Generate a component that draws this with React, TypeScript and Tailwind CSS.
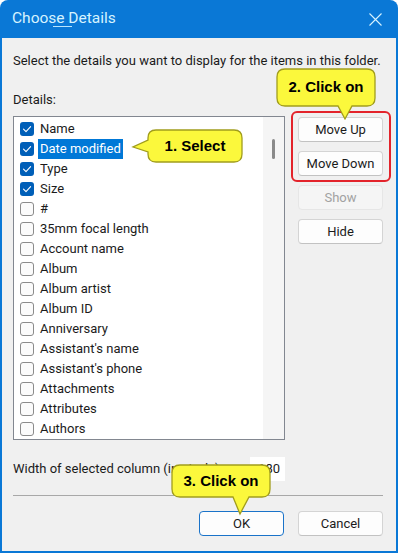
import React from "react";

const items: { label: string; checked: boolean; selected?: boolean }[] = [
  { label: "Name", checked: true },
  { label: "Date modified", checked: true, selected: true },
  { label: "Type", checked: true },
  { label: "Size", checked: true },
  { label: "#", checked: false },
  { label: "35mm focal length", checked: false },
  { label: "Account name", checked: false },
  { label: "Album", checked: false },
  { label: "Album artist", checked: false },
  { label: "Album ID", checked: false },
  { label: "Anniversary", checked: false },
  { label: "Assistant's name", checked: false },
  { label: "Assistant's phone", checked: false },
  { label: "Attachments", checked: false },
  { label: "Attributes", checked: false },
  { label: "Authors", checked: false },
];

function CheckBox({ checked }: { checked: boolean }) {
  if (checked) {
    return (
      <div className="flex h-[14px] w-[14px] shrink-0 items-center justify-center rounded-[3px] bg-[#005fb8]">
        <svg width="14" height="14" viewBox="0 0 14 14">
          <path d="M3.5 7.2 L6 9.6 L10.6 4.6" fill="none" stroke="#ffffff" strokeWidth="1.1" strokeLinecap="round" strokeLinejoin="round" />
        </svg>
      </div>
    );
  }
  return <div className="h-[14px] w-[14px] shrink-0 rounded-[3px] border border-[#8b8b8b] bg-[#fbfbfb]" />;
}

function Btn({ children, disabled, primary, className = "" }: { children: React.ReactNode; disabled?: boolean; primary?: boolean; className?: string }) {
  const base = "flex h-[25px] w-[85px] items-center justify-center rounded-[4px] text-[13px]";
  if (disabled) return <div className={`${base} border border-[#e6e6e6] bg-[#f5f5f5] text-[#a2a2a2] ${className}`}>{children}</div>;
  if (primary) return <div className={`${base} border border-[#1a73c9] bg-[#fdfdfd] text-[#1b1b1b] ${className}`}>{children}</div>;
  return <div className={`${base} border border-[#d4d4d4] border-b-[#c2c2c2] bg-[#fdfdfd] text-[#1b1b1b] ${className}`}>{children}</div>;
}

export default function App() {
  return (
    <div className="relative h-[553px] w-[398px] overflow-hidden bg-white" style={{ fontFamily: 'Roboto, "Noto Sans", sans-serif' }}>
      <div className="flex h-full flex-col rounded-t-[8px] bg-[#0a78d6] px-[2px] pb-[2px]">
        <div className="flex h-[38px] shrink-0 items-center justify-between pl-[10px] pr-[14px]">
          <span className="relative whitespace-nowrap text-[15.5px] leading-none text-[#d6f3ff]">
            Choose Details
            <span className="absolute left-[41px] top-[15px] h-[1px] w-[19px] bg-[#b8e6ff]" />
          </span>
          <svg width="13" height="13" viewBox="0 0 13 13">
            <path d="M0.5 0.5 L12.5 12.5 M12.5 0.5 L0.5 12.5" stroke="#d6f3ff" strokeWidth="1.1" />
          </svg>
        </div>
        <div className="flex flex-1 flex-col whitespace-nowrap bg-[#f0f0f0] pl-[11px] pr-[13px] pt-[15px] text-[13px] text-[#1b1b1b]">
          <div className="h-[16px] leading-[16px]">Select the details you want to display for the items in this folder.</div>
          <div className="mt-[23px] h-[16px] leading-[16px]">Details:</div>
          <div className="mt-[8px] flex gap-[13px]">
            <div className="flex h-[324px] w-[272px] overflow-hidden border border-[#828790] bg-white">
              <div className="flex flex-1 flex-col pt-[2px]">
                {items.map((it) => (
                  <div key={it.label} className="flex h-[20px] shrink-0 items-center pl-[6px]">
                    <CheckBox checked={it.checked} />
                    <span
                      className={`ml-[4px] flex h-[20px] items-center px-[2px] ${it.selected ? "bg-[#0078d7] text-white" : ""}`}
                    >
                      {it.label}
                    </span>
                  </div>
                ))}
              </div>
              <div className="flex w-[21px] justify-center bg-[#f5f5f5] pt-[22px]">
                <div className="h-[20px] w-[3px] rounded-full bg-[#8a8a8a]" />
              </div>
            </div>
            <div className="flex flex-col gap-[9px] pt-[1px]">
              <Btn>Move Up</Btn>
              <Btn>Move Down</Btn>
              <Btn disabled>Show</Btn>
              <Btn>Hide</Btn>
            </div>
          </div>
          <div className="mt-[17px] flex items-center justify-between pr-[98px]">
            <span>Width of selected column (in pixels):</span>
            <div className="flex h-[24px] w-[35px] items-center justify-end bg-white pr-[5px]">180</div>
          </div>
          <div className="mt-[14px] h-[1px] bg-[#a8a8a8]" />
          <div className="mt-[15px] flex justify-end gap-[14px]">
            <Btn primary>OK</Btn>
            <Btn>Cancel</Btn>
          </div>
        </div>
      </div>

      <svg className="pointer-events-none absolute left-0 top-0" width="398" height="553" viewBox="0 0 398 553">
        <rect x="292" y="112" width="98" height="69" rx="5" fill="none" stroke="#e3232b" strokeWidth="2" />
        <path d="M156,130 H234 Q242,130 242,138 V154 Q242,162 234,162 H156 Q148,162 148,154 V152 L133,147 L148,140 V138 Q148,130 156,130 Z" fill="#fbf83c" stroke="#a19d1c" strokeWidth="1.3" />
        <path d="M285,69 H367 Q375,69 375,77 V98 Q375,106 367,106 H352 L345,119 L338,106 H285 Q277,106 277,98 V77 Q277,69 285,69 Z" fill="#fbf83c" stroke="#a19d1c" strokeWidth="1.3" />
        <path d="M180,465 H262 Q270,465 270,473 V489 Q270,497 262,497 H249 L240,514 L233,497 H180 Q172,497 172,489 V473 Q172,465 180,465 Z" fill="#fbf83c" stroke="#a19d1c" strokeWidth="1.3" />
      </svg>
      <div className="absolute left-[148px] top-[130px] flex h-[32px] w-[94px] items-center justify-center text-[15px] font-bold text-black" style={{ fontFamily: '"Liberation Sans", Arial, sans-serif' }}>1. Select</div>
      <div className="absolute left-[277px] top-[69px] flex h-[37px] w-[98px] items-center justify-center text-[15px] font-bold text-black" style={{ fontFamily: '"Liberation Sans", Arial, sans-serif' }}>2. Click on</div>
      <div className="absolute left-[172px] top-[465px] flex h-[32px] w-[98px] items-center justify-center text-[15px] font-bold text-black" style={{ fontFamily: '"Liberation Sans", Arial, sans-serif' }}>3. Click on</div>
    </div>
  );
}
